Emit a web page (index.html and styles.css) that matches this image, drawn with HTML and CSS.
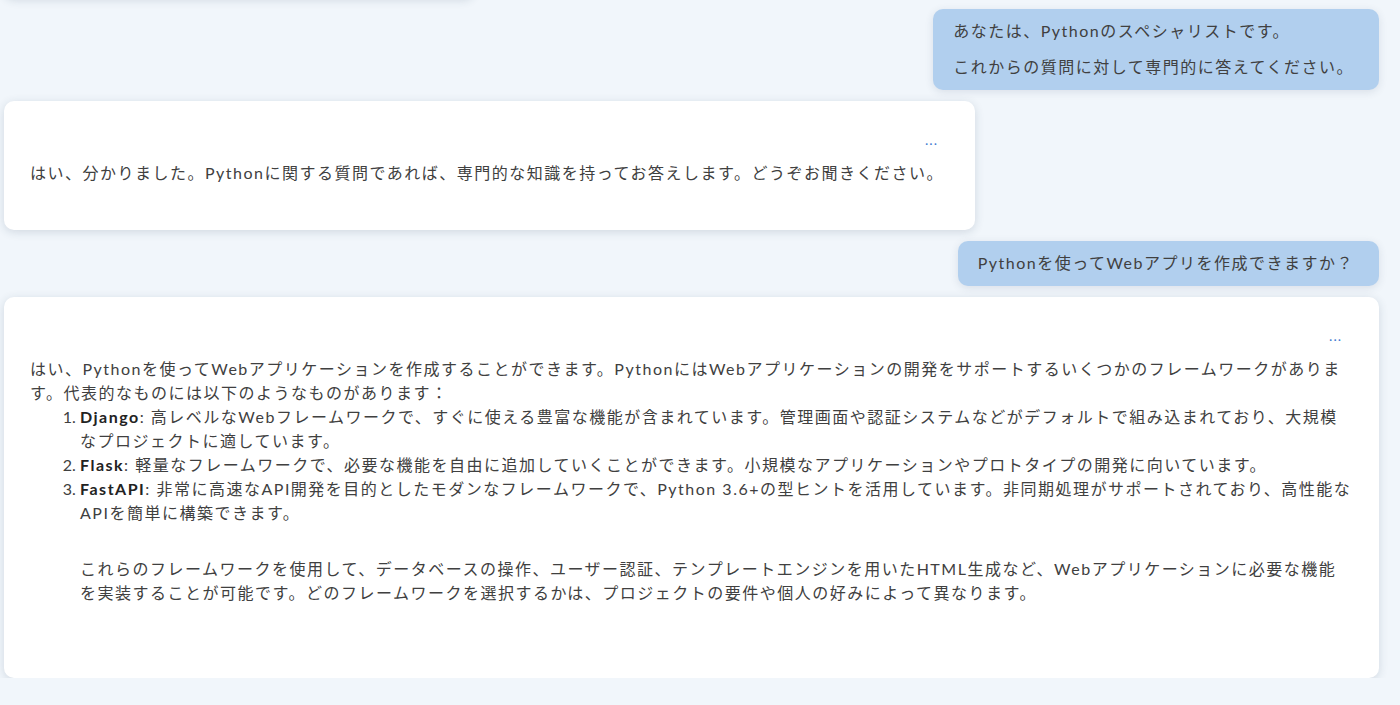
FILE: index.html
```html
<!DOCTYPE html>
<html lang="ja">
	<head>
		<meta charset="utf-8" />
		<title>Chat</title>
		<link rel="stylesheet" href="styles.css">
	</head>
	<body>
		<div id="chat">

			<div class="bot-card prev-card"></div>

			<div class="user-bubble">
				<div class="line">あなたは、Pythonのスペシャリストです。</div>
				<div class="line">これからの質問に対して専門的に答えてください。</div>
			</div>

			<div class="bot-card">
				<div class="menu-dots">...</div>
				<div class="answer">はい、分かりました。Pythonに関する質問であれば、専門的な知識を持ってお答えします。どうぞお聞きください。</div>
			</div>

			<div class="user-bubble">
				<div class="line">Pythonを使ってWebアプリを作成できますか？</div>
			</div>

			<div class="bot-card wide">
				<div class="menu-dots">...</div>
				<div class="answer">
					はい、Pythonを使ってWebアプリケーションを作成することができます。PythonにはWebアプリケーションの開発をサポートするいくつかのフレームワークがあります。代表的なものには以下のようなものがあります：
					<ol class="answer-list">
						<li><b>Django</b>: 高レベルなWebフレームワークで、すぐに使える豊富な機能が含まれています。管理画面や認証システムなどがデフォルトで組み込まれており、大規模なプロジェクトに適しています。</li>
						<li><b>Flask</b>: 軽量なフレームワークで、必要な機能を自由に追加していくことができます。小規模なアプリケーションやプロトタイプの開発に向いています。</li>
						<li><b>FastAPI</b>: 非常に高速なAPI開発を目的としたモダンなフレームワークで、Python 3.6+の型ヒントを活用しています。非同期処理がサポートされており、高性能なAPIを簡単に構築できます。
							<p class="after-list">これらのフレームワークを使用して、データベースの操作、ユーザー認証、テンプレートエンジンを用いたHTML生成など、Webアプリケーションに必要な機能を実装することが可能です。どのフレームワークを選択するかは、プロジェクトの要件や個人の好みによって異なります。</p>
						</li>
					</ol>
				</div>
			</div>

		</div>
	</body>
</html>
```

FILE: styles.css
```css
body{
	margin: 0;
	background-color: #f1f6fb;
	font-family: Lato, "Noto Sans CJK JP", sans-serif;
	font-size: 16px;
	color: #404040;
	overflow: hidden;
}

#chat{
	display: flex;
	flex-direction: column;
	align-items: flex-start;
	gap: 11px;
	padding: 0 21px 0 4px;
}

.bot-card{
	background-color: #ffffff;
	border-radius: 10px;
	box-shadow: 0 2px 10px rgba(40, 60, 90, 0.16);
	padding: 28px 31px 45px 26px;
	box-sizing: border-box;
	max-width: 100%;
}

.wide{
	align-self: stretch;
	padding-right: 27px;
}

.wide .menu-dots{
	padding-right: 10px;
}

.prev-card{
	width: 470px;
	height: 40px;
	padding: 0;
	margin-top: -42px;
}

.menu-dots{
	text-align: right;
	padding-right: 6px;
	color: #3f7bd1;
	font-size: 14px;
	line-height: 22px;
	letter-spacing: 1px;
	margin-bottom: 10px;
}

.answer{
	line-height: 24px;
	letter-spacing: 1.5px;
}

.answer-list{
	margin: 0 0 28px 0;
	padding-left: 50px;
}

.answer-list li::marker{
	letter-spacing: 0;
}

.answer-list b{
	color: #222;
}

.after-list{
	margin: 32px 0 0 0;
}

.user-bubble{
	align-self: flex-end;
	background-color: #b1cfee;
	border-radius: 10px;
	box-shadow: 0 2px 8px rgba(40, 60, 90, 0.12);
	padding: 10px 25px 11px 20px;
	display: flex;
	flex-direction: column;
	gap: 12px;
	line-height: 24px;
	letter-spacing: 1.5px;
}
```
